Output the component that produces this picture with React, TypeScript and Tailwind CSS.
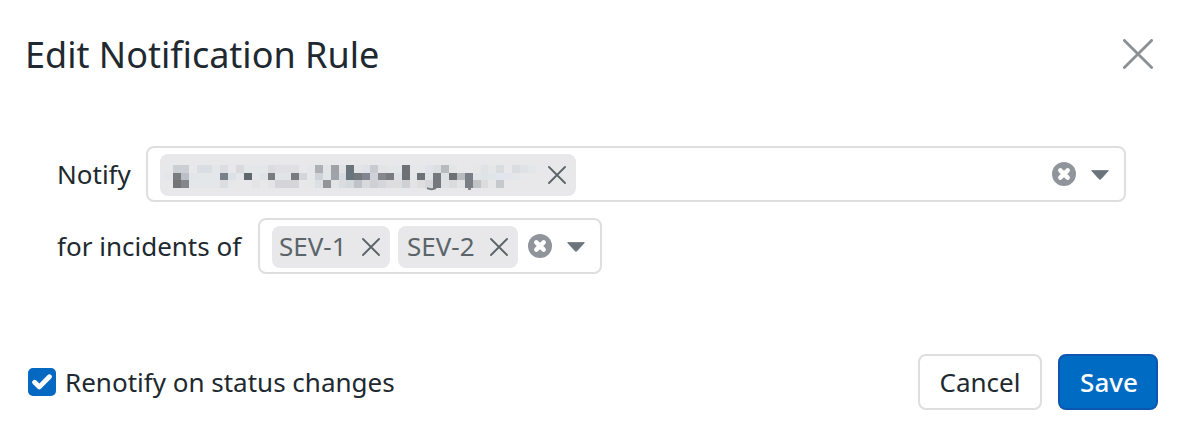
import { useState } from "react";

// Shades of the redacted recipient, one array per mosaic row; "" leaves the tag's own colour.
const MOSAIC: string[][] = [
  "e6e8ea cbced2 cbced2 - dadee2 dadee2 e4e7ea dcdde2 - d9dade e4e7ea e4e7ea e4e7ea dcdcdf e0e0e4 e0e0e4 e0e0e4 - e4e6e8 adb0b4 e2e4e8 9fa1a6 e0e2e4 69757c e2e4e8 e0e2e8 c8cbd2 e2e4e6 e4e6e8 e2e7ea 6d7176 e5e7e9 e6e7e9 dfe4ea dcdfe2 b6bbc0 e4e5e7 - - e4e6e8 e0e3e6 e4e6e8 d9dcdf - dadde0 dfe2e6 e5e6e9",
  "e4e7ea 7b7c80 bbbfc8 e2e6ea e4e7ea e4e7ea e4e7ea 78818a dde1e6 e4e7ea 5f686d e4e7ea dfe3e6 787c81 e2e5e8 e0e4e6 777b80 d5d6db e6e7e9 cdd3d8 e0e6e8 9fa4aa d8dce0 69757c 75797e 808590 cfd2d6 86888d 787b7f dde0e4 6d7176 e4e6e8 6d7178 dfe3e6 75787c dee1e4 6d7075 b8bcc0 7a7e86 e2e5e8 dce4e6 e0e5e8 e2e4ee e4e5ec e4e6e9 - -",
  "- 737476 858689 e4e7ea e4e7ea e4e7ea e4e7ea dcdde0 e6e7e9 - - e4e4e6 - e2e4e6 d5d5d9 d5d5d9 d5d5d9 - e6e7e9 dde0e2 929498 e2e4e6 dadcdf d3d9dc bfc3c8 d8d9dd cfd0d5 d5d6da dddde0 dddde0 cfd0d4 e4e4e6 dedee1 d6d7db 75787c e0e1e3 dadbdd e2e3e5 7a7e86 c2c3c5 dcdcde e6e6e8 c5c9cc - - - -",
].map((row) => row.split(" ").map((c) => (c === "-" ? "" : "#" + c)));

const ROWS = [
  { y: 0, h: 8 },
  { y: 8, h: 7 },
  { y: 15, h: 8 },
];

const columnX = (k: number) => Math.round(k * 7.89);

function RedactedName() {
  return (
    <svg width="372" height="26" viewBox="0 0 372 26" shapeRendering="crispEdges" aria-hidden="true">
      {MOSAIC.map((row, r) =>
        row.map((fill, k) =>
          fill ? (
            <rect key={`${r}-${k}`} x={columnX(k)} y={ROWS[r].y} width={columnX(k + 1) - columnX(k)} height={ROWS[r].h} fill={fill} />
          ) : null,
        ),
      )}
      <path d="M262 23.2q5 2.2 9-.2" fill="none" stroke="#75787c" strokeWidth="2" shapeRendering="auto" />
      <rect x="303" y="23" width="3" height="2" fill="#85888d" />
    </svg>
  );
}

function Cross() {
  return (
    <svg width="18" height="18" viewBox="0 0 18 18" fill="none" stroke="#5b6368" strokeWidth="1.8" strokeLinecap="round">
      <path d="M1 1l16 16M17 1L1 17" />
    </svg>
  );
}

function ClearIcon() {
  return (
    <svg width="24" height="24" viewBox="0 0 24 24">
      <circle cx="12" cy="12" r="12" fill="#8f959b" />
      <path d="M8.3 8.3l7.4 7.4M15.7 8.3l-7.4 7.4" stroke="#fff" strokeWidth="4.5" strokeLinecap="round" />
    </svg>
  );
}

function Caret() {
  return (
    <svg width="18" height="10" viewBox="0 0 18 10" fill="#6b747a" stroke="#6b747a" strokeWidth="1" strokeLinejoin="round">
      <path d="M.7.7h16.6L10 8.7q-1 1-2 0z" />
    </svg>
  );
}

function Controls() {
  return (
    <div className="flex items-center">
      <button aria-label="Clear"><ClearIcon /></button>
      <button aria-label="Open" className="ml-[15px] pt-0.5"><Caret /></button>
    </div>
  );
}

function SeverityTag({ label, className }: { label: string; className: string }) {
  return (
    <div className={`mt-0.5 flex h-[42px] items-center justify-between rounded-lg bg-[#e8e8ea] pr-[10px] text-[#5b6469] ${className}`}>
      <span className="pb-0.5">{label}</span>
      <button aria-label={`Remove ${label}`}><Cross /></button>
    </div>
  );
}

export default function App() {
  const [renotify, setRenotify] = useState(true);
  return (
    <div className="flex h-[424px] w-[1182px] flex-col bg-white font-['Noto_Sans',sans-serif] text-[26px] leading-9 text-[#20292f]">
      <header className="flex h-[108px] items-center justify-between pr-[29px] pl-[25px]">
        <h1 className="pt-0.5 text-[36px] leading-[48px]">Edit Notification Rule</h1>
        <button aria-label="Close">
          <svg width="30" height="30" viewBox="0 0 30 30" fill="none" stroke="#8b9095" strokeWidth="2.8" strokeLinecap="round">
            <path d="M1.4 1.4l27.2 27.2M28.6 1.4L1.4 28.6" />
          </svg>
        </button>
      </header>

      <main className="flex flex-col gap-4 pt-[38px] pl-[57px]">
        <div className="flex h-14 items-center">
          <span className="w-[89px]">Notify</span>
          <div className="flex h-14 w-[980px] items-center justify-between rounded-lg border-2 border-[#dedee0] pr-[15px] pl-3">
            <div className="mt-0.5 flex h-[42px] w-[416px] items-center justify-between rounded-lg bg-[#e8e8ea] pr-[10px] pl-[5px]">
              <div className="flex pt-[5px]"><RedactedName /></div>
              <button aria-label="Remove recipient"><Cross /></button>
            </div>
            <Controls />
          </div>
        </div>

        <div className="flex h-14 items-center">
          <span className="w-[201px]">for incidents of</span>
          <div className="flex h-14 w-[344px] items-center rounded-lg border-2 border-[#dedee0] pl-3">
            <SeverityTag label="SEV-1" className="w-[118px] pl-[7px]" />
            <SeverityTag label="SEV-2" className="mr-[10px] ml-2 w-[120px] pl-[9px]" />
            <Controls />
          </div>
        </div>
      </main>

      <footer className="mt-20 flex h-14 items-center justify-between pr-6 pl-7">
        <label className="flex items-center gap-[9px]">
          <input type="checkbox" className="sr-only" checked={renotify} onChange={(e) => setRenotify(e.target.checked)} />
          <span className="flex size-7 items-center justify-center rounded-[5px] bg-[#0569c1]">
            {renotify && (
              <svg width="20" height="16" viewBox="0 0 20 16" fill="none" stroke="#fff" strokeWidth="4.8" strokeLinecap="round" strokeLinejoin="round">
                <path d="M2.6 8.3l4.8 4.6L17.4 2.8" />
              </svg>
            )}
          </span>
          <span>Renotify on status changes</span>
        </label>
        <div className="flex gap-4">
          <button className="h-14 w-[124px] rounded-lg border-2 border-[#dedee0]">Cancel</button>
          <button className="h-14 w-[100px] rounded-lg border-2 border-[#0c55b0] bg-[#006bc2] pl-0.5 font-medium text-white">Save</button>
        </div>
      </footer>
    </div>
  );
}
